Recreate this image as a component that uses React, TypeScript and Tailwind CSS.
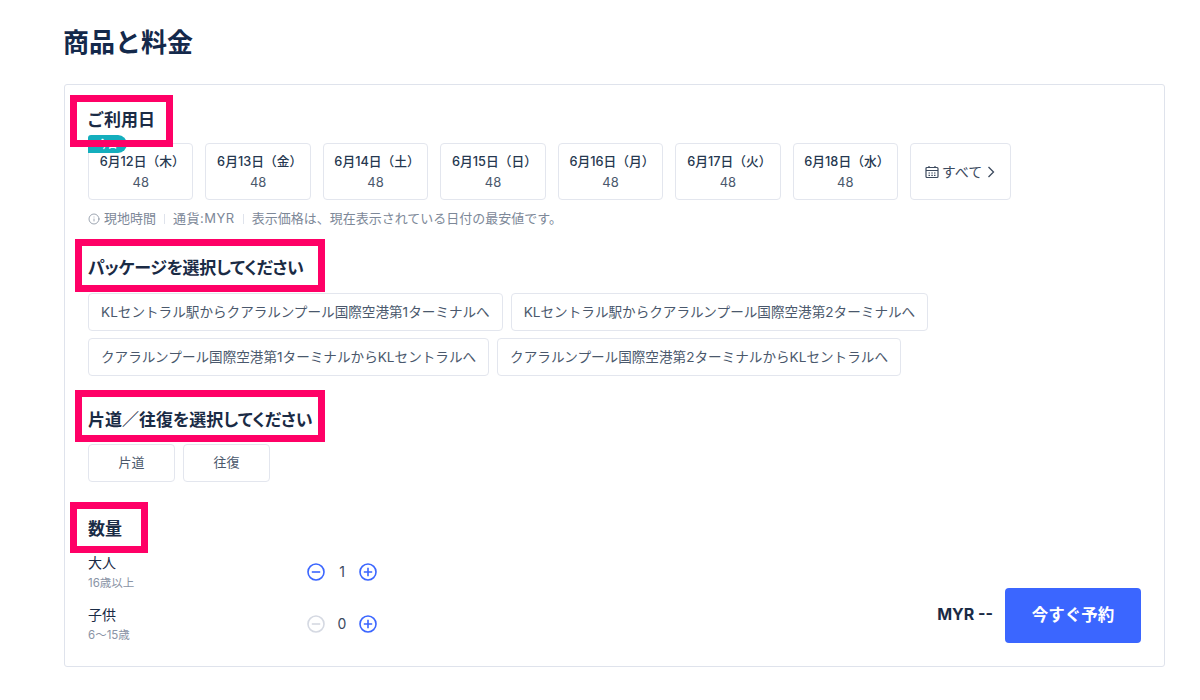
import { Info } from 'lucide-react';

const dates = [
  '6月12日（木）',
  '6月13日（金）',
  '6月14日（土）',
  '6月15日（日）',
  '6月16日（月）',
  '6月17日（火）',
  '6月18日（水）',
];

const packages = [
  ['KLセントラル駅からクアラルンプール国際空港第1ターミナルへ', 'KLセントラル駅からクアラルンプール国際空港第2ターミナルへ'],
  ['クアラルンプール国際空港第1ターミナルからKLセントラルへ', 'クアラルンプール国際空港第2ターミナルからKLセントラルへ'],
];

function Stepper({ value, canMinus }: { value: number; canMinus: boolean }) {
  return (
    <div className="flex items-center">
      <svg width="18" height="18" viewBox="0 0 18 18" fill="none" className={canMinus ? 'text-[#3b66ff]' : 'text-[#d5d9e2]'} stroke="currentColor" strokeWidth="1.6">
        <circle cx="9" cy="9" r="8" />
        <path d="M4.8 9h8.4" />
      </svg>
      <span className="w-[34px] text-center text-[14px] leading-none text-[#3c4a5e]">{value}</span>
      <svg width="18" height="18" viewBox="0 0 18 18" fill="none" className="text-[#3b66ff]" stroke="currentColor" strokeWidth="1.6">
        <circle cx="9" cy="9" r="8" />
        <path d="M4.8 9h8.4M9 4.8v8.4" />
      </svg>
    </div>
  );
}

function Traveler({ label, age, value, canMinus }: { label: string; age: string; value: number; canMinus: boolean }) {
  return (
    <div className="flex h-[40px] items-center">
      <div className="w-[219px]">
        <div className="text-[14px] leading-[20px] text-[#1a2b45]">{label}</div>
        <div className="text-[11.5px] leading-[20px] text-[#8a94a6]">{age}</div>
      </div>
      <div className="mb-[2px]">
        <Stepper value={value} canMinus={canMinus} />
      </div>
    </div>
  );
}

export default function App() {
  return (
    <div className="h-[700px] w-[1200px] overflow-hidden bg-white pl-[64px] pt-[25px] font-['Inter','Noto_Sans_CJK_JP',sans-serif] text-[#1a2b45]">
      <h1 className="-ml-px text-[26px] font-bold leading-[36px] text-[#14294b]">商品と料金</h1>

      <div className="mt-[23px] h-[583px] w-[1101px] rounded-[3px] border border-[#dfe3ec] pl-[23px] pt-[24px]">
        {/* ご利用日 */}
        <div className="relative -ml-px h-[22px] text-[17px] font-bold leading-[22px]">
          ご利用日
          <div className="absolute left-[-17px] top-[-14px] z-20 h-[52px] w-[103px] border-[7px] border-[#ff0066]" />
        </div>

        <div className="mt-[12px] flex gap-[12px]">
          {dates.map((d, i) => (
            <div key={d} className="relative flex h-[57px] w-[105.45px] flex-col items-center justify-center rounded-[4px] border border-[#e3e6ee]">
              {i === 0 && (
                <div className="absolute left-[-1px] top-[-9px] flex h-[18px] w-[39px] items-center justify-center rounded-r-[9px] rounded-tl-[3px] bg-[#14aebd] text-[10px] font-medium text-white">
                  今日
                </div>
              )}
              <div className="relative ml-[3px] text-[12.75px] font-medium leading-[20px] text-[#263850]">{d}</div>
              <div className="relative text-[13px] leading-[20px] text-[#4a586c]">48</div>
            </div>
          ))}
          <div className="flex h-[57px] w-[101px] items-center justify-center rounded-[4px] border border-[#e3e6ee] text-[14px] text-[#3c4a5e]">
            <svg width="14" height="14" viewBox="0 0 14 14" fill="none" stroke="currentColor" strokeWidth="1.2" className="mr-[3px]">
              <rect x="1" y="2.5" width="12" height="10" rx="1" />
              <path d="M1 5.5h12M4 1v2M10 1v2" />
              <path d="M3.5 8h1.5M6.3 8h1.5M9 8h1.5M3.5 10.3h1.5M6.3 10.3h1.5M9 10.3h1.5" />
            </svg>
            すべて
            <svg width="10" height="14" viewBox="0 0 10 14" fill="none" stroke="currentColor" strokeWidth="1.3" className="ml-[4px]">
              <path d="M2.5 2l5 5-5 5" />
            </svg>
          </div>
        </div>

        <div className="mt-[9px] flex h-[20px] items-center text-[13px] text-[#7d8898]">
          <Info size={12} strokeWidth={1.5} className="mr-[4px]" />
          現地時間
          <span className="mx-[8px] h-[10px] w-px bg-[#dfe3ec]" />
          <span className="tracking-[0.5px]">通貨:MYR</span>
          <span className="mx-[8px] h-[10px] w-px bg-[#dfe3ec]" />
          表示価格は、現在表示されている日付の最安値です。
        </div>

        {/* パッケージ */}
        <div className="relative mt-[28px] h-[22px] text-[17px] font-bold leading-[22px] tracking-[-0.3px] [font-feature-settings:'palt']">
          パッケージを選択してください
          <div className="absolute left-[-13px] top-[-18px] z-20 h-[53px] w-[250px] border-[7px] border-[#ff0066]" />
        </div>

        <div className="mt-[14px] flex flex-col gap-[7px]">
          {packages.map((row) => (
            <div key={row[0]} className="flex gap-[8px]">
              {row.map((p) => (
                <div key={p} className="flex h-[38px] items-center rounded-[4px] border border-[#e3e6ee] px-[12px] text-[13.6px] text-[#4a586c]">
                  {p}
                </div>
              ))}
            </div>
          ))}
        </div>

        {/* 片道／往復 */}
        <div className="relative mt-[33px] h-[22px] text-[17px] font-bold leading-[22px] [font-feature-settings:'palt']">
          片道／往復を選択してください
          <div className="absolute left-[-13px] top-[-19px] z-20 h-[52px] w-[250px] border-[7px] border-[#ff0066]" />
        </div>

        <div className="mt-[13px] flex gap-[8px]">
          {['片道', '往復'].map((t) => (
            <div key={t} className="flex h-[38px] w-[87px] items-center justify-center rounded-[4px] border border-[#e3e6ee] text-[13px] text-[#4a586c]">
              {t}
            </div>
          ))}
        </div>

        {/* 数量 */}
        <div className="relative mt-[36px] h-[22px] text-[17px] font-bold leading-[22px]">
          数量
          <div className="absolute left-[-18px] top-[-16px] z-20 h-[51px] w-[78px] border-[7px] border-[#ff0066]" />
        </div>

        <div className="mt-[13px] flex items-end justify-between pr-[23px]">
          <div className="flex flex-col gap-[12px]">
            <Traveler label="大人" age="16歳以上" value={1} canMinus />
            <Traveler label="子供" age="6〜15歳" value={0} canMinus={false} />
          </div>
          <div className="mb-[2px] flex items-center gap-[12px]">
            <span className="mb-[3px] text-[16px] font-bold">MYR --</span>
            <button className="h-[55px] w-[136px] rounded-[4px] bg-[#3b66ff] text-[16.5px] font-bold text-white">今すぐ予約</button>
          </div>
        </div>
      </div>
    </div>
  );
}
